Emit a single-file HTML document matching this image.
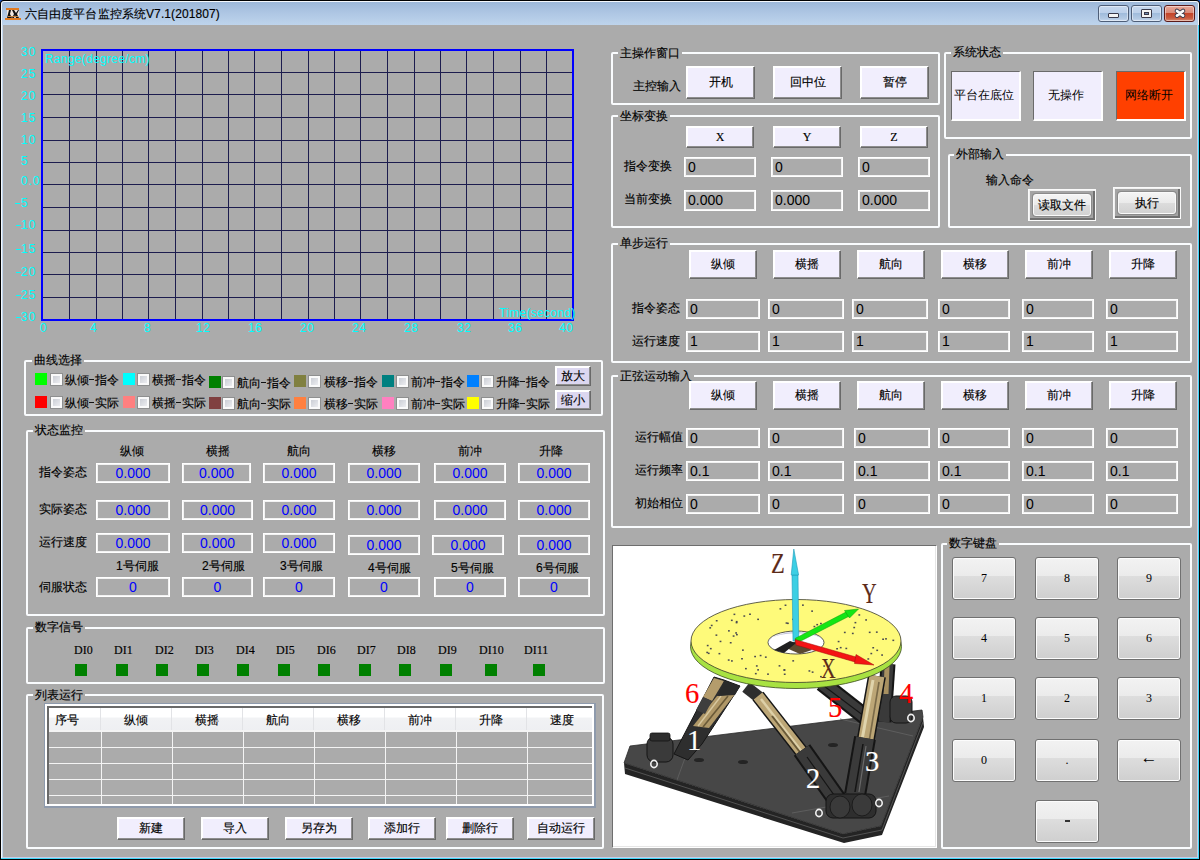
<!DOCTYPE html><html><head><meta charset="utf-8"><style>
*{box-sizing:border-box;margin:0;padding:0}
html,body{width:1200px;height:860px;overflow:hidden;background:#000}
body{position:relative;font-family:"Liberation Sans",sans-serif;font-size:12px;color:#000}
.hy{display:inline-block;position:relative;width:6px;height:12px;vertical-align:top}.hy:after{content:"";position:absolute;left:0;top:5px;width:5px;height:1px;background:#111}
.t{position:absolute;white-space:nowrap;-webkit-text-stroke:0.15px currentColor}
.gb{position:absolute;border:2px solid #FAFCFE;border-radius:2px}
.gt{position:absolute;background:#ABABAB;padding:0 2px;font-size:12px;line-height:12px;white-space:nowrap;-webkit-text-stroke:0.15px #000}
.btn{position:absolute;border:1px solid;border-color:#FFFFFF #696969 #696969 #FFFFFF;box-shadow:inset -1px -1px 0 #8E8E8E,inset 1px 1px 0 #FFFFFF;text-align:center;white-space:nowrap;font-size:12px;-webkit-text-stroke:0.15px #000}
.eb{position:absolute;border:1px solid #FFFFFF;box-shadow:inset 0 0 0 1px #F2F2F2;white-space:nowrap;background:#ABABAB}
.kb{position:absolute;border:1px solid #707070;border-radius:3px;background:linear-gradient(#F2F2F2 0%,#EBEBEB 45%,#DDDDDD 45%,#CFCFCF 100%);box-shadow:inset 0 0 0 1px #FCFCFC;text-align:center;font-family:"Liberation Serif",serif;font-size:12px}
</style></head><body>

<div style="position:absolute;left:0px;top:0px;width:1200px;height:860px;background:#000"></div>
<div style="position:absolute;left:0px;top:0px;width:3px;height:3px;background:#1E5AC8"></div>
<div style="position:absolute;left:1197px;top:0px;width:3px;height:3px;background:#1E5AC8"></div>
<div style="position:absolute;left:0px;top:0px;width:1200px;height:860px;background:#000;border-radius:4px 4px 0 0"></div>
<div style="position:absolute;left:1px;top:1px;width:1198px;height:858px;background:#F4F8FC;border-radius:3px 3px 0 0"></div>
<div style="position:absolute;left:2px;top:2px;width:1196px;height:23px;background:linear-gradient(#9DB8D9,#AFC7E4 50%,#BED4EC);border-radius:2px 2px 0 0"></div>
<div style="position:absolute;left:2px;top:25px;width:1px;height:833px;background:#C4D8EE"></div>
<div style="position:absolute;left:3px;top:25px;width:1194px;height:832px;background:#ABABAB"></div>
<div style="position:absolute;left:1197px;top:25px;width:1px;height:833px;background:#C8CDE8"></div>
<div style="position:absolute;left:1198px;top:25px;width:1px;height:834px;background:#40D8F8"></div>
<div style="position:absolute;left:3px;top:857px;width:1195px;height:1px;background:#C8CDE8"></div>
<div style="position:absolute;left:1px;top:858px;width:1198px;height:1px;background:#40D8F8"></div>
<svg style="position:absolute;left:4px;top:7px" width="18" height="14" viewBox="0 0 18 14"><rect x="2" y="1" width="13" height="2" fill="#E07A20"/><rect x="1" y="11" width="16" height="2" fill="#E07A20"/><rect x="3" y="3" width="12" height="8" fill="#F2E8E0"/><path d="M3,11 L5,3 L7,3 L6,7 L8,11 Z M8,3 L10,3 L12,6 L14,3 L15,3 L13,7 L15,11 L12,11 L11,8 L10,11 L8,11 L10,7 Z" fill="#111"/><rect x="4" y="9" width="10" height="1" fill="#C08040"/></svg>
<div class="t" style="left:25px;top:8px;font-size:12px;line-height:12px;color:#000;letter-spacing:0.1px">六自由度平台监控系统V7.1(201807)</div>
<div style="position:absolute;left:1098px;top:5px;width:31px;height:17px;border:1px solid #4E5E78;border-radius:3px;background:linear-gradient(#C6D8EE 0%,#BCD0EA 45%,#A0BCDC 50%,#B4CAE4 85%,#C8DAF0 100%);box-shadow:inset 0 0 0 1px rgba(255,255,255,0.45)"></div>
<div style="position:absolute;left:1131px;top:5px;width:31px;height:17px;border:1px solid #4E5E78;border-radius:3px;background:linear-gradient(#C6D8EE 0%,#BCD0EA 45%,#A0BCDC 50%,#B4CAE4 85%,#C8DAF0 100%);box-shadow:inset 0 0 0 1px rgba(255,255,255,0.45)"></div>
<div style="position:absolute;left:1164px;top:5px;width:31px;height:17px;border:1px solid #5A1A1A;border-radius:3px;background:linear-gradient(#E8A898 0%,#D98A78 45%,#C4452A 50%,#C85A3E 80%,#D88A70 100%);box-shadow:inset 0 0 0 1px rgba(255,255,255,0.45)"></div>
<div style="position:absolute;left:1108px;top:13px;width:11px;height:5px;background:#F4F4F4;border:1px solid #3A3A4A;border-radius:1px"></div>
<div style="position:absolute;left:1141px;top:9px;width:11px;height:9px;background:#F4F4F4;border:1px solid #3A3A4A;border-radius:1px"></div>
<div style="position:absolute;left:1144px;top:12px;width:5px;height:3px;background:#6E8AB0;border:1px solid #3A3A4A"></div>
<svg style="position:absolute;left:1172px;top:7px" width="16" height="13" viewBox="0 0 16 13"><path d="M5 4 L11 8.6 M11 4 L5 8.6" stroke="#3A3A4A" stroke-width="4.6" stroke-linecap="round"/><path d="M5 4 L11 8.6 M11 4 L5 8.6" stroke="#FAFAFA" stroke-width="2.8" stroke-linecap="round"/></svg>
<svg style="position:absolute;left:0;top:0" width="600" height="345"><rect x="69" y="51" width="1" height="268" fill="#1C1C4E"/><rect x="96" y="51" width="1" height="268" fill="#1C1C4E"/><rect x="122" y="51" width="1" height="268" fill="#1C1C4E"/><rect x="148" y="51" width="1" height="268" fill="#1C1C4E"/><rect x="175" y="51" width="1" height="268" fill="#1C1C4E"/><rect x="202" y="51" width="1" height="268" fill="#1C1C4E"/><rect x="228" y="51" width="1" height="268" fill="#1C1C4E"/><rect x="254" y="51" width="1" height="268" fill="#1C1C4E"/><rect x="281" y="51" width="1" height="268" fill="#1C1C4E"/><rect x="308" y="51" width="1" height="268" fill="#1C1C4E"/><rect x="334" y="51" width="1" height="268" fill="#1C1C4E"/><rect x="360" y="51" width="1" height="268" fill="#1C1C4E"/><rect x="387" y="51" width="1" height="268" fill="#1C1C4E"/><rect x="414" y="51" width="1" height="268" fill="#1C1C4E"/><rect x="440" y="51" width="1" height="268" fill="#1C1C4E"/><rect x="466" y="51" width="1" height="268" fill="#1C1C4E"/><rect x="493" y="51" width="1" height="268" fill="#1C1C4E"/><rect x="520" y="51" width="1" height="268" fill="#1C1C4E"/><rect x="546" y="51" width="1" height="268" fill="#1C1C4E"/><rect x="43" y="72" width="529" height="1" fill="#1C1C4E"/><rect x="43" y="94" width="529" height="1" fill="#1C1C4E"/><rect x="43" y="117" width="529" height="1" fill="#1C1C4E"/><rect x="43" y="140" width="529" height="1" fill="#1C1C4E"/><rect x="43" y="162" width="529" height="1" fill="#1C1C4E"/><rect x="43" y="184" width="529" height="1" fill="#1C1C4E"/><rect x="43" y="207" width="529" height="1" fill="#1C1C4E"/><rect x="43" y="230" width="529" height="1" fill="#1C1C4E"/><rect x="43" y="252" width="529" height="1" fill="#1C1C4E"/><rect x="43" y="274" width="529" height="1" fill="#1C1C4E"/><rect x="43" y="297" width="529" height="1" fill="#1C1C4E"/><rect x="42" y="50" width="531" height="270" fill="none" stroke="#0000FF" stroke-width="2"/></svg>
<div class="t" style="left:21px;top:46px;font-size:12px;line-height:12px;color:#00FFFF;letter-spacing:1px;-webkit-text-stroke:0">30</div>
<div class="t" style="left:21px;top:68px;font-size:12px;line-height:12px;color:#00FFFF;letter-spacing:1px;-webkit-text-stroke:0">25</div>
<div class="t" style="left:21px;top:90px;font-size:12px;line-height:12px;color:#00FFFF;letter-spacing:1px;-webkit-text-stroke:0">20</div>
<div class="t" style="left:21px;top:112px;font-size:12px;line-height:12px;color:#00FFFF;letter-spacing:1px;-webkit-text-stroke:0">15</div>
<div class="t" style="left:21px;top:134px;font-size:12px;line-height:12px;color:#00FFFF;letter-spacing:1px;-webkit-text-stroke:0">10</div>
<div class="t" style="left:21px;top:155px;font-size:12px;line-height:12px;color:#00FFFF;letter-spacing:1px;-webkit-text-stroke:0">5</div>
<div class="t" style="left:21px;top:175px;font-size:12px;line-height:12px;color:#00FFFF;letter-spacing:1px;-webkit-text-stroke:0">0.0</div>
<div style="position:absolute;left:15px;top:203px;width:5px;height:1px;background:#00FFFF"></div>
<div class="t" style="left:21px;top:197px;font-size:12px;line-height:12px;color:#00FFFF;letter-spacing:1px;-webkit-text-stroke:0">5</div>
<div style="position:absolute;left:16px;top:225px;width:5px;height:1px;background:#00FFFF"></div>
<div class="t" style="left:21px;top:219px;font-size:12px;line-height:12px;color:#00FFFF;letter-spacing:1px;-webkit-text-stroke:0">10</div>
<div style="position:absolute;left:16px;top:249px;width:5px;height:1px;background:#00FFFF"></div>
<div class="t" style="left:21px;top:243px;font-size:12px;line-height:12px;color:#00FFFF;letter-spacing:1px;-webkit-text-stroke:0">15</div>
<div style="position:absolute;left:16px;top:272px;width:5px;height:1px;background:#00FFFF"></div>
<div class="t" style="left:21px;top:266px;font-size:12px;line-height:12px;color:#00FFFF;letter-spacing:1px;-webkit-text-stroke:0">20</div>
<div style="position:absolute;left:16px;top:295px;width:5px;height:1px;background:#00FFFF"></div>
<div class="t" style="left:21px;top:289px;font-size:12px;line-height:12px;color:#00FFFF;letter-spacing:1px;-webkit-text-stroke:0">25</div>
<div style="position:absolute;left:16px;top:317px;width:5px;height:1px;background:#00FFFF"></div>
<div class="t" style="left:21px;top:311px;font-size:12px;line-height:12px;color:#00FFFF;letter-spacing:1px;-webkit-text-stroke:0">30</div>
<div class="t" style="left:40px;top:322px;font-size:12px;line-height:12px;color:#00FFFF;letter-spacing:0.6px;-webkit-text-stroke:0">0</div>
<div class="t" style="left:90px;top:322px;font-size:12px;line-height:12px;color:#00FFFF;letter-spacing:0.6px;-webkit-text-stroke:0">4</div>
<div class="t" style="left:144px;top:322px;font-size:12px;line-height:12px;color:#00FFFF;letter-spacing:0.6px;-webkit-text-stroke:0">8</div>
<div class="t" style="left:196px;top:322px;font-size:12px;line-height:12px;color:#00FFFF;letter-spacing:0.6px;-webkit-text-stroke:0">12</div>
<div class="t" style="left:248px;top:322px;font-size:12px;line-height:12px;color:#00FFFF;letter-spacing:0.6px;-webkit-text-stroke:0">16</div>
<div class="t" style="left:300px;top:322px;font-size:12px;line-height:12px;color:#00FFFF;letter-spacing:0.6px;-webkit-text-stroke:0">20</div>
<div class="t" style="left:352px;top:322px;font-size:12px;line-height:12px;color:#00FFFF;letter-spacing:0.6px;-webkit-text-stroke:0">24</div>
<div class="t" style="left:404px;top:322px;font-size:12px;line-height:12px;color:#00FFFF;letter-spacing:0.6px;-webkit-text-stroke:0">28</div>
<div class="t" style="left:457px;top:322px;font-size:12px;line-height:12px;color:#00FFFF;letter-spacing:0.6px;-webkit-text-stroke:0">32</div>
<div class="t" style="left:508px;top:322px;font-size:12px;line-height:12px;color:#00FFFF;letter-spacing:0.6px;-webkit-text-stroke:0">36</div>
<div class="t" style="left:559px;top:322px;font-size:12px;line-height:12px;color:#00FFFF;letter-spacing:0.6px;-webkit-text-stroke:0">40</div>
<div class="t" style="left:45px;top:53px;font-size:12px;line-height:12px;color:#00FFFF;letter-spacing:0.3px;-webkit-text-stroke:0">Range(degree/cm)</div>
<div class="t" style="left:499px;top:307px;font-size:12px;line-height:12px;color:#00FFFF;letter-spacing:0.3px;-webkit-text-stroke:0">Time(second)</div>
<div class="gb" style="left:24px;top:360px;width:579px;height:56px"></div>
<div class="gt" style="left:32px;top:354px">曲线选择</div>
<div style="position:absolute;left:35px;top:373px;width:12px;height:12px;background:#00FF00"></div>
<div style="position:absolute;left:50px;top:373px;width:13px;height:13px;border:1px solid #8E8F8F;background:linear-gradient(135deg,#C2C6CE,#F6F6F8);box-shadow:inset 0 0 0 2px #FAFAFA"></div>
<div class="t" style="left:65px;top:374px;font-size:12px;line-height:12px;color:#000;">纵倾<span class="hy"></span>指令</div>
<div style="position:absolute;left:35px;top:396px;width:12px;height:12px;background:#FF0000"></div>
<div style="position:absolute;left:50px;top:396px;width:13px;height:13px;border:1px solid #8E8F8F;background:linear-gradient(135deg,#C2C6CE,#F6F6F8);box-shadow:inset 0 0 0 2px #FAFAFA"></div>
<div class="t" style="left:65px;top:397px;font-size:12px;line-height:12px;color:#000;">纵倾<span class="hy"></span>实际</div>
<div style="position:absolute;left:123px;top:373px;width:12px;height:12px;background:#00FFFF"></div>
<div style="position:absolute;left:137px;top:373px;width:13px;height:13px;border:1px solid #8E8F8F;background:linear-gradient(135deg,#C2C6CE,#F6F6F8);box-shadow:inset 0 0 0 2px #FAFAFA"></div>
<div class="t" style="left:152px;top:374px;font-size:12px;line-height:12px;color:#000;">横摇<span class="hy"></span>指令</div>
<div style="position:absolute;left:123px;top:396px;width:12px;height:12px;background:#FF8080"></div>
<div style="position:absolute;left:137px;top:396px;width:13px;height:13px;border:1px solid #8E8F8F;background:linear-gradient(135deg,#C2C6CE,#F6F6F8);box-shadow:inset 0 0 0 2px #FAFAFA"></div>
<div class="t" style="left:152px;top:397px;font-size:12px;line-height:12px;color:#000;">横摇<span class="hy"></span>实际</div>
<div style="position:absolute;left:209px;top:376px;width:12px;height:12px;background:#008000"></div>
<div style="position:absolute;left:222px;top:376px;width:13px;height:13px;border:1px solid #8E8F8F;background:linear-gradient(135deg,#C2C6CE,#F6F6F8);box-shadow:inset 0 0 0 2px #FAFAFA"></div>
<div class="t" style="left:237px;top:377px;font-size:12px;line-height:12px;color:#000;">航向<span class="hy"></span>指令</div>
<div style="position:absolute;left:209px;top:397px;width:12px;height:12px;background:#804040"></div>
<div style="position:absolute;left:222px;top:397px;width:13px;height:13px;border:1px solid #8E8F8F;background:linear-gradient(135deg,#C2C6CE,#F6F6F8);box-shadow:inset 0 0 0 2px #FAFAFA"></div>
<div class="t" style="left:237px;top:398px;font-size:12px;line-height:12px;color:#000;">航向<span class="hy"></span>实际</div>
<div style="position:absolute;left:294px;top:375px;width:12px;height:12px;background:#808040"></div>
<div style="position:absolute;left:308px;top:375px;width:13px;height:13px;border:1px solid #8E8F8F;background:linear-gradient(135deg,#C2C6CE,#F6F6F8);box-shadow:inset 0 0 0 2px #FAFAFA"></div>
<div class="t" style="left:324px;top:376px;font-size:12px;line-height:12px;color:#000;">横移<span class="hy"></span>指令</div>
<div style="position:absolute;left:294px;top:397px;width:12px;height:12px;background:#FF8040"></div>
<div style="position:absolute;left:308px;top:397px;width:13px;height:13px;border:1px solid #8E8F8F;background:linear-gradient(135deg,#C2C6CE,#F6F6F8);box-shadow:inset 0 0 0 2px #FAFAFA"></div>
<div class="t" style="left:324px;top:398px;font-size:12px;line-height:12px;color:#000;">横移<span class="hy"></span>实际</div>
<div style="position:absolute;left:382px;top:375px;width:12px;height:12px;background:#008080"></div>
<div style="position:absolute;left:396px;top:375px;width:13px;height:13px;border:1px solid #8E8F8F;background:linear-gradient(135deg,#C2C6CE,#F6F6F8);box-shadow:inset 0 0 0 2px #FAFAFA"></div>
<div class="t" style="left:411px;top:376px;font-size:12px;line-height:12px;color:#000;">前冲<span class="hy"></span>指令</div>
<div style="position:absolute;left:382px;top:397px;width:12px;height:12px;background:#FF80C0"></div>
<div style="position:absolute;left:396px;top:397px;width:13px;height:13px;border:1px solid #8E8F8F;background:linear-gradient(135deg,#C2C6CE,#F6F6F8);box-shadow:inset 0 0 0 2px #FAFAFA"></div>
<div class="t" style="left:411px;top:398px;font-size:12px;line-height:12px;color:#000;">前冲<span class="hy"></span>实际</div>
<div style="position:absolute;left:467px;top:375px;width:12px;height:12px;background:#0080FF"></div>
<div style="position:absolute;left:481px;top:375px;width:13px;height:13px;border:1px solid #8E8F8F;background:linear-gradient(135deg,#C2C6CE,#F6F6F8);box-shadow:inset 0 0 0 2px #FAFAFA"></div>
<div class="t" style="left:496px;top:376px;font-size:12px;line-height:12px;color:#000;">升降<span class="hy"></span>指令</div>
<div style="position:absolute;left:467px;top:397px;width:12px;height:12px;background:#FFFF00"></div>
<div style="position:absolute;left:481px;top:397px;width:13px;height:13px;border:1px solid #8E8F8F;background:linear-gradient(135deg,#C2C6CE,#F6F6F8);box-shadow:inset 0 0 0 2px #FAFAFA"></div>
<div class="t" style="left:496px;top:398px;font-size:12px;line-height:12px;color:#000;">升降<span class="hy"></span>实际</div>
<div class="btn" style="left:555px;top:366px;width:36px;height:20px;background:#DCD7F0;"><span style="line-height:18px">放大</span></div>
<div class="btn" style="left:555px;top:390px;width:36px;height:20px;background:#DCD7F0;"><span style="line-height:18px">缩小</span></div>
<div class="gb" style="left:26px;top:430px;width:579px;height:186px"></div>
<div class="gt" style="left:33px;top:424px">状态监控</div>
<div class="t" style="left:120px;top:445px;font-size:12px;line-height:12px;color:#000;">纵倾</div>
<div class="t" style="left:206px;top:445px;font-size:12px;line-height:12px;color:#000;">横摇</div>
<div class="t" style="left:287px;top:445px;font-size:12px;line-height:12px;color:#000;">航向</div>
<div class="t" style="left:372px;top:445px;font-size:12px;line-height:12px;color:#000;">横移</div>
<div class="t" style="left:458px;top:445px;font-size:12px;line-height:12px;color:#000;">前冲</div>
<div class="t" style="left:539px;top:445px;font-size:12px;line-height:12px;color:#000;">升降</div>
<div class="t" style="left:39px;top:466px;font-size:12px;line-height:12px;color:#000;">指令姿态</div>
<div class="t" style="left:39px;top:503px;font-size:12px;line-height:12px;color:#000;">实际姿态</div>
<div class="t" style="left:39px;top:536px;font-size:12px;line-height:12px;color:#000;">运行速度</div>
<div class="t" style="left:39px;top:581px;font-size:12px;line-height:12px;color:#000;">伺服状态</div>
<div class="eb" style="left:96px;top:463px;width:74px;height:20px;color:#0000FF;text-align:center;font-size:14px;line-height:18px">0.000</div>
<div class="eb" style="left:96px;top:500px;width:74px;height:20px;color:#0000FF;text-align:center;font-size:14px;line-height:18px">0.000</div>
<div class="eb" style="left:96px;top:533px;width:74px;height:20px;color:#0000FF;text-align:center;font-size:14px;line-height:18px">0.000</div>
<div class="eb" style="left:96px;top:577px;width:74px;height:20px;color:#0000FF;text-align:center;font-size:14px;line-height:18px">0</div>
<div class="eb" style="left:182px;top:463px;width:69px;height:20px;color:#0000FF;text-align:center;font-size:14px;line-height:18px">0.000</div>
<div class="eb" style="left:182px;top:500px;width:71px;height:20px;color:#0000FF;text-align:center;font-size:14px;line-height:18px">0.000</div>
<div class="eb" style="left:182px;top:533px;width:71px;height:20px;color:#0000FF;text-align:center;font-size:14px;line-height:18px">0.000</div>
<div class="eb" style="left:182px;top:577px;width:71px;height:20px;color:#0000FF;text-align:center;font-size:14px;line-height:18px">0</div>
<div class="eb" style="left:263px;top:463px;width:72px;height:20px;color:#0000FF;text-align:center;font-size:14px;line-height:18px">0.000</div>
<div class="eb" style="left:263px;top:500px;width:72px;height:20px;color:#0000FF;text-align:center;font-size:14px;line-height:18px">0.000</div>
<div class="eb" style="left:263px;top:533px;width:72px;height:20px;color:#0000FF;text-align:center;font-size:14px;line-height:18px">0.000</div>
<div class="eb" style="left:263px;top:577px;width:72px;height:20px;color:#0000FF;text-align:center;font-size:14px;line-height:18px">0</div>
<div class="eb" style="left:348px;top:463px;width:72px;height:20px;color:#0000FF;text-align:center;font-size:14px;line-height:18px">0.000</div>
<div class="eb" style="left:348px;top:500px;width:72px;height:20px;color:#0000FF;text-align:center;font-size:14px;line-height:18px">0.000</div>
<div class="eb" style="left:348px;top:535px;width:72px;height:20px;color:#0000FF;text-align:center;font-size:14px;line-height:18px">0.000</div>
<div class="eb" style="left:348px;top:577px;width:72px;height:20px;color:#0000FF;text-align:center;font-size:14px;line-height:18px">0</div>
<div class="eb" style="left:434px;top:463px;width:72px;height:20px;color:#0000FF;text-align:center;font-size:14px;line-height:18px">0.000</div>
<div class="eb" style="left:434px;top:500px;width:72px;height:20px;color:#0000FF;text-align:center;font-size:14px;line-height:18px">0.000</div>
<div class="eb" style="left:432px;top:535px;width:72px;height:20px;color:#0000FF;text-align:center;font-size:14px;line-height:18px">0.000</div>
<div class="eb" style="left:434px;top:577px;width:72px;height:20px;color:#0000FF;text-align:center;font-size:14px;line-height:18px">0</div>
<div class="eb" style="left:518px;top:463px;width:72px;height:20px;color:#0000FF;text-align:center;font-size:14px;line-height:18px">0.000</div>
<div class="eb" style="left:518px;top:500px;width:72px;height:20px;color:#0000FF;text-align:center;font-size:14px;line-height:18px">0.000</div>
<div class="eb" style="left:518px;top:535px;width:72px;height:20px;color:#0000FF;text-align:center;font-size:14px;line-height:18px">0.000</div>
<div class="eb" style="left:518px;top:577px;width:72px;height:20px;color:#0000FF;text-align:center;font-size:14px;line-height:18px">0</div>
<div class="t" style="left:116px;top:560px;font-size:12px;line-height:12px;color:#000;">1号伺服</div>
<div class="t" style="left:202px;top:560px;font-size:12px;line-height:12px;color:#000;">2号伺服</div>
<div class="t" style="left:280px;top:560px;font-size:12px;line-height:12px;color:#000;">3号伺服</div>
<div class="t" style="left:368px;top:562px;font-size:12px;line-height:12px;color:#000;">4号伺服</div>
<div class="t" style="left:451px;top:562px;font-size:12px;line-height:12px;color:#000;">5号伺服</div>
<div class="t" style="left:536px;top:562px;font-size:12px;line-height:12px;color:#000;">6号伺服</div>
<div class="gb" style="left:26px;top:627px;width:579px;height:57px"></div>
<div class="gt" style="left:33px;top:621px">数字信号</div>
<div class="t" style="left:74px;top:643px;font-size:12px;line-height:12px;color:#000;font-family:'Liberation Serif',serif;letter-spacing:0px;transform:scaleY(1.12);transform-origin:0 0">DI0</div>
<div style="position:absolute;left:75px;top:664px;width:12px;height:12px;background:#008000"></div>
<div class="t" style="left:114px;top:643px;font-size:12px;line-height:12px;color:#000;font-family:'Liberation Serif',serif;letter-spacing:0px;transform:scaleY(1.12);transform-origin:0 0">DI1</div>
<div style="position:absolute;left:116px;top:664px;width:12px;height:12px;background:#008000"></div>
<div class="t" style="left:155px;top:643px;font-size:12px;line-height:12px;color:#000;font-family:'Liberation Serif',serif;letter-spacing:0px;transform:scaleY(1.12);transform-origin:0 0">DI2</div>
<div style="position:absolute;left:156px;top:664px;width:12px;height:12px;background:#008000"></div>
<div class="t" style="left:195px;top:643px;font-size:12px;line-height:12px;color:#000;font-family:'Liberation Serif',serif;letter-spacing:0px;transform:scaleY(1.12);transform-origin:0 0">DI3</div>
<div style="position:absolute;left:197px;top:664px;width:12px;height:12px;background:#008000"></div>
<div class="t" style="left:236px;top:643px;font-size:12px;line-height:12px;color:#000;font-family:'Liberation Serif',serif;letter-spacing:0px;transform:scaleY(1.12);transform-origin:0 0">DI4</div>
<div style="position:absolute;left:237px;top:664px;width:12px;height:12px;background:#008000"></div>
<div class="t" style="left:276px;top:643px;font-size:12px;line-height:12px;color:#000;font-family:'Liberation Serif',serif;letter-spacing:0px;transform:scaleY(1.12);transform-origin:0 0">DI5</div>
<div style="position:absolute;left:278px;top:664px;width:12px;height:12px;background:#008000"></div>
<div class="t" style="left:317px;top:643px;font-size:12px;line-height:12px;color:#000;font-family:'Liberation Serif',serif;letter-spacing:0px;transform:scaleY(1.12);transform-origin:0 0">DI6</div>
<div style="position:absolute;left:318px;top:664px;width:12px;height:12px;background:#008000"></div>
<div class="t" style="left:357px;top:643px;font-size:12px;line-height:12px;color:#000;font-family:'Liberation Serif',serif;letter-spacing:0px;transform:scaleY(1.12);transform-origin:0 0">DI7</div>
<div style="position:absolute;left:359px;top:664px;width:12px;height:12px;background:#008000"></div>
<div class="t" style="left:397px;top:643px;font-size:12px;line-height:12px;color:#000;font-family:'Liberation Serif',serif;letter-spacing:0px;transform:scaleY(1.12);transform-origin:0 0">DI8</div>
<div style="position:absolute;left:399px;top:664px;width:12px;height:12px;background:#008000"></div>
<div class="t" style="left:438px;top:643px;font-size:12px;line-height:12px;color:#000;font-family:'Liberation Serif',serif;letter-spacing:0px;transform:scaleY(1.12);transform-origin:0 0">DI9</div>
<div style="position:absolute;left:440px;top:664px;width:12px;height:12px;background:#008000"></div>
<div class="t" style="left:479px;top:643px;font-size:12px;line-height:12px;color:#000;font-family:'Liberation Serif',serif;letter-spacing:0px;transform:scaleY(1.12);transform-origin:0 0">DI10</div>
<div style="position:absolute;left:485px;top:664px;width:12px;height:12px;background:#008000"></div>
<div class="t" style="left:524px;top:643px;font-size:12px;line-height:12px;color:#000;font-family:'Liberation Serif',serif;letter-spacing:0px;transform:scaleY(1.12);transform-origin:0 0">DI11</div>
<div style="position:absolute;left:533px;top:664px;width:12px;height:12px;background:#008000"></div>
<div class="gb" style="left:26px;top:694px;width:578px;height:155px"></div>
<div class="gt" style="left:33px;top:689px">列表运行</div>
<div style="position:absolute;left:44px;top:703px;width:552px;height:105px;background:#8E9AAC"></div>
<div style="position:absolute;left:45px;top:704px;width:549px;height:102px;background:#FFFFFF"></div>
<div style="position:absolute;left:47px;top:706px;width:545px;height:98px;background:#696969"></div>
<div style="position:absolute;left:49px;top:708px;width:543px;height:96px;background:#ABABAB"></div>
<div style="position:absolute;left:49px;top:708px;width:543px;height:23px;background:linear-gradient(#FFFFFF 0%,#FFFFFF 38%,#F1F2F4 45%,#EEEFF2 100%)"></div>
<div style="position:absolute;left:100px;top:708px;width:1px;height:23px;background:#E2E3E6"></div>
<div style="position:absolute;left:101px;top:731px;width:1px;height:73px;background:#F4F4F4"></div>
<div style="position:absolute;left:171px;top:708px;width:1px;height:23px;background:#E2E3E6"></div>
<div style="position:absolute;left:172px;top:731px;width:1px;height:73px;background:#F4F4F4"></div>
<div style="position:absolute;left:242px;top:708px;width:1px;height:23px;background:#E2E3E6"></div>
<div style="position:absolute;left:243px;top:731px;width:1px;height:73px;background:#F4F4F4"></div>
<div style="position:absolute;left:313px;top:708px;width:1px;height:23px;background:#E2E3E6"></div>
<div style="position:absolute;left:314px;top:731px;width:1px;height:73px;background:#F4F4F4"></div>
<div style="position:absolute;left:384px;top:708px;width:1px;height:23px;background:#E2E3E6"></div>
<div style="position:absolute;left:385px;top:731px;width:1px;height:73px;background:#F4F4F4"></div>
<div style="position:absolute;left:455px;top:708px;width:1px;height:23px;background:#E2E3E6"></div>
<div style="position:absolute;left:456px;top:731px;width:1px;height:73px;background:#F4F4F4"></div>
<div style="position:absolute;left:526px;top:708px;width:1px;height:23px;background:#E2E3E6"></div>
<div style="position:absolute;left:527px;top:731px;width:1px;height:73px;background:#F4F4F4"></div>
<div style="position:absolute;left:49px;top:730px;width:543px;height:2px;background:#F4F4F4"></div>
<div style="position:absolute;left:49px;top:747px;width:543px;height:1px;background:#F4F4F4"></div>
<div style="position:absolute;left:49px;top:763px;width:543px;height:1px;background:#F4F4F4"></div>
<div style="position:absolute;left:49px;top:779px;width:543px;height:1px;background:#F4F4F4"></div>
<div style="position:absolute;left:49px;top:795px;width:543px;height:1px;background:#F4F4F4"></div>
<div class="t" style="left:55px;top:714px;font-size:12px;line-height:12px;color:#000;">序号</div>
<div class="t" style="left:124px;top:714px;font-size:12px;line-height:12px;color:#000;">纵倾</div>
<div class="t" style="left:195px;top:714px;font-size:12px;line-height:12px;color:#000;">横摇</div>
<div class="t" style="left:266px;top:714px;font-size:12px;line-height:12px;color:#000;">航向</div>
<div class="t" style="left:337px;top:714px;font-size:12px;line-height:12px;color:#000;">横移</div>
<div class="t" style="left:408px;top:714px;font-size:12px;line-height:12px;color:#000;">前冲</div>
<div class="t" style="left:479px;top:714px;font-size:12px;line-height:12px;color:#000;">升降</div>
<div class="t" style="left:550px;top:714px;font-size:12px;line-height:12px;color:#000;">速度</div>
<div class="btn" style="left:117px;top:817px;width:68px;height:23px;background:#F1EEFD;"><span style="line-height:21px">新建</span></div>
<div class="btn" style="left:201px;top:817px;width:68px;height:23px;background:#F1EEFD;"><span style="line-height:21px">导入</span></div>
<div class="btn" style="left:285px;top:817px;width:68px;height:23px;background:#F1EEFD;"><span style="line-height:21px">另存为</span></div>
<div class="btn" style="left:368px;top:817px;width:68px;height:23px;background:#F1EEFD;"><span style="line-height:21px">添加行</span></div>
<div class="btn" style="left:446px;top:817px;width:68px;height:23px;background:#F1EEFD;"><span style="line-height:21px">删除行</span></div>
<div class="btn" style="left:527px;top:817px;width:68px;height:23px;background:#F1EEFD;"><span style="line-height:21px">自动运行</span></div>
<div class="gb" style="left:611px;top:52px;width:329px;height:53px"></div>
<div class="gt" style="left:618px;top:47px">主操作窗口</div>
<div class="t" style="left:633px;top:80px;font-size:12px;line-height:12px;color:#000;">主控输入</div>
<div class="btn" style="left:686px;top:66px;width:69px;height:33px;background:#F1EEFD;"><span style="line-height:31px">开机</span></div>
<div class="btn" style="left:773px;top:66px;width:69px;height:33px;background:#F1EEFD;"><span style="line-height:31px">回中位</span></div>
<div class="btn" style="left:860px;top:66px;width:69px;height:33px;background:#F1EEFD;"><span style="line-height:31px">暂停</span></div>
<div class="gb" style="left:611px;top:115px;width:329px;height:113px"></div>
<div class="gt" style="left:618px;top:110px">坐标变换</div>
<div class="btn" style="left:686px;top:126px;width:68px;height:22px;background:#F1EEFD;font-family:'Liberation Serif',serif;font-size:12px"><span style="line-height:20px">X</span></div>
<div class="btn" style="left:773px;top:126px;width:68px;height:22px;background:#F1EEFD;font-family:'Liberation Serif',serif;font-size:12px"><span style="line-height:20px">Y</span></div>
<div class="btn" style="left:860px;top:126px;width:68px;height:22px;background:#F1EEFD;font-family:'Liberation Serif',serif;font-size:12px"><span style="line-height:20px">Z</span></div>
<div class="t" style="left:624px;top:160px;font-size:12px;line-height:12px;color:#000;">指令变换</div>
<div class="t" style="left:624px;top:193px;font-size:12px;line-height:12px;color:#000;">当前变换</div>
<div class="eb" style="left:684px;top:157px;width:72px;height:20px;color:#000;font-size:14px;line-height:18px;padding-left:3px">0</div>
<div class="eb" style="left:684px;top:190px;width:72px;height:21px;color:#000;font-size:14px;line-height:19px;padding-left:3px">0.000</div>
<div class="eb" style="left:771px;top:157px;width:72px;height:20px;color:#000;font-size:14px;line-height:18px;padding-left:3px">0</div>
<div class="eb" style="left:771px;top:190px;width:72px;height:21px;color:#000;font-size:14px;line-height:19px;padding-left:3px">0.000</div>
<div class="eb" style="left:858px;top:157px;width:72px;height:20px;color:#000;font-size:14px;line-height:18px;padding-left:3px">0</div>
<div class="eb" style="left:858px;top:190px;width:72px;height:21px;color:#000;font-size:14px;line-height:19px;padding-left:3px">0.000</div>
<div class="gb" style="left:944px;top:52px;width:248px;height:87px"></div>
<div class="gt" style="left:951px;top:46px">系统状态</div>
<div style="position:absolute;left:951px;top:71px;width:70px;height:50px;background:#F1EEFD;border:1px solid;border-width:1px 2px 2px 1px;border-color:#6A6A6A #FFFFFF #FFFFFF #6A6A6A;text-align:center;padding-right:4px;line-height:46px;font-size:12px;white-space:nowrap">平台在底位</div>
<div style="position:absolute;left:1033px;top:71px;width:70px;height:50px;background:#F1EEFD;border:1px solid;border-width:1px 2px 2px 1px;border-color:#6A6A6A #FFFFFF #FFFFFF #6A6A6A;text-align:center;padding-right:4px;line-height:46px;font-size:12px;white-space:nowrap">无操作</div>
<div style="position:absolute;left:1116px;top:71px;width:70px;height:50px;background:#FF4000;border:1px solid;border-width:1px 2px 2px 1px;border-color:#6A6A6A #FFFFFF #FFFFFF #6A6A6A;text-align:center;padding-right:4px;line-height:46px;font-size:12px;white-space:nowrap">网络断开</div>
<div class="gb" style="left:948px;top:154px;width:244px;height:74px"></div>
<div class="gt" style="left:954px;top:148px">外部输入</div>
<div class="t" style="left:986px;top:174px;font-size:12px;line-height:12px;color:#000;">输入命令</div>
<div style="position:absolute;left:1028px;top:189px;width:68px;height:32px;border:1px solid #FAFAFA;box-shadow:inset 1px 1px 0 #F0F0F0,inset -2px -2px 0 #707070;background:#A4A4A4"></div>
<div style="position:absolute;left:1033px;top:194px;width:58px;height:22px;border:1px solid #FAFAFA;border-radius:3px;box-shadow:0 0 0 1px #8A8A8A;background:linear-gradient(#F4F4F4 0%,#EAEAEA 50%,#DCDCDC 51%,#D2D2D2 100%);text-align:center;line-height:20px;font-size:12px;white-space:nowrap;-webkit-text-stroke:0.15px #000">读取文件</div>
<div style="position:absolute;left:1113px;top:187px;width:68px;height:32px;border:1px solid #FAFAFA;box-shadow:inset 1px 1px 0 #F0F0F0,inset -2px -2px 0 #707070;background:#A4A4A4"></div>
<div style="position:absolute;left:1118px;top:192px;width:58px;height:22px;border:1px solid #FAFAFA;border-radius:3px;box-shadow:0 0 0 1px #8A8A8A;background:linear-gradient(#F4F4F4 0%,#EAEAEA 50%,#DCDCDC 51%,#D2D2D2 100%);text-align:center;line-height:20px;font-size:12px;white-space:nowrap;-webkit-text-stroke:0.15px #000">执行</div>
<div class="gb" style="left:611px;top:243px;width:581px;height:120px"></div>
<div class="gt" style="left:618px;top:237px">单步运行</div>
<div class="gb" style="left:611px;top:375px;width:581px;height:153px"></div>
<div class="gt" style="left:618px;top:370px">正弦运动输入</div>
<div class="btn" style="left:689px;top:250px;width:68px;height:29px;background:#F1EEFD;"><span style="line-height:27px">纵倾</span></div>
<div class="btn" style="left:689px;top:381px;width:68px;height:29px;background:#F1EEFD;"><span style="line-height:27px">纵倾</span></div>
<div class="btn" style="left:773px;top:250px;width:68px;height:29px;background:#F1EEFD;"><span style="line-height:27px">横摇</span></div>
<div class="btn" style="left:773px;top:381px;width:68px;height:29px;background:#F1EEFD;"><span style="line-height:27px">横摇</span></div>
<div class="btn" style="left:857px;top:250px;width:68px;height:29px;background:#F1EEFD;"><span style="line-height:27px">航向</span></div>
<div class="btn" style="left:857px;top:381px;width:68px;height:29px;background:#F1EEFD;"><span style="line-height:27px">航向</span></div>
<div class="btn" style="left:941px;top:250px;width:68px;height:29px;background:#F1EEFD;"><span style="line-height:27px">横移</span></div>
<div class="btn" style="left:941px;top:381px;width:68px;height:29px;background:#F1EEFD;"><span style="line-height:27px">横移</span></div>
<div class="btn" style="left:1025px;top:250px;width:68px;height:29px;background:#F1EEFD;"><span style="line-height:27px">前冲</span></div>
<div class="btn" style="left:1025px;top:381px;width:68px;height:29px;background:#F1EEFD;"><span style="line-height:27px">前冲</span></div>
<div class="btn" style="left:1109px;top:250px;width:68px;height:29px;background:#F1EEFD;"><span style="line-height:27px">升降</span></div>
<div class="btn" style="left:1109px;top:381px;width:68px;height:29px;background:#F1EEFD;"><span style="line-height:27px">升降</span></div>
<div class="t" style="left:632px;top:302px;font-size:12px;line-height:12px;color:#000;">指令姿态</div>
<div class="t" style="left:632px;top:335px;font-size:12px;line-height:12px;color:#000;">运行速度</div>
<div class="t" style="left:635px;top:431px;font-size:12px;line-height:12px;color:#000;">运行幅值</div>
<div class="t" style="left:635px;top:464px;font-size:12px;line-height:12px;color:#000;">运行频率</div>
<div class="t" style="left:635px;top:497px;font-size:12px;line-height:12px;color:#000;">初始相位</div>
<div class="eb" style="left:686px;top:299px;width:74px;height:20px;color:#000;font-size:14px;line-height:18px;padding-left:3px">0</div>
<div class="eb" style="left:686px;top:331px;width:74px;height:21px;color:#000;font-size:14px;line-height:19px;padding-left:3px">1</div>
<div class="eb" style="left:686px;top:428px;width:74px;height:20px;color:#000;font-size:14px;line-height:18px;padding-left:3px">0</div>
<div class="eb" style="left:686px;top:461px;width:74px;height:20px;color:#000;font-size:14px;line-height:18px;padding-left:3px">0.1</div>
<div class="eb" style="left:686px;top:494px;width:74px;height:20px;color:#000;font-size:14px;line-height:18px;padding-left:3px">0</div>
<div class="eb" style="left:768px;top:299px;width:76px;height:20px;color:#000;font-size:14px;line-height:18px;padding-left:3px">0</div>
<div class="eb" style="left:768px;top:331px;width:76px;height:21px;color:#000;font-size:14px;line-height:19px;padding-left:3px">1</div>
<div class="eb" style="left:768px;top:428px;width:76px;height:20px;color:#000;font-size:14px;line-height:18px;padding-left:3px">0</div>
<div class="eb" style="left:768px;top:461px;width:76px;height:20px;color:#000;font-size:14px;line-height:18px;padding-left:3px">0.1</div>
<div class="eb" style="left:768px;top:494px;width:76px;height:20px;color:#000;font-size:14px;line-height:18px;padding-left:3px">0</div>
<div class="eb" style="left:852px;top:299px;width:76px;height:20px;color:#000;font-size:14px;line-height:18px;padding-left:3px">0</div>
<div class="eb" style="left:852px;top:331px;width:76px;height:21px;color:#000;font-size:14px;line-height:19px;padding-left:3px">1</div>
<div class="eb" style="left:854px;top:428px;width:76px;height:20px;color:#000;font-size:14px;line-height:18px;padding-left:3px">0</div>
<div class="eb" style="left:854px;top:461px;width:76px;height:20px;color:#000;font-size:14px;line-height:18px;padding-left:3px">0.1</div>
<div class="eb" style="left:854px;top:494px;width:76px;height:20px;color:#000;font-size:14px;line-height:18px;padding-left:3px">0</div>
<div class="eb" style="left:938px;top:299px;width:72px;height:20px;color:#000;font-size:14px;line-height:18px;padding-left:3px">0</div>
<div class="eb" style="left:938px;top:331px;width:72px;height:21px;color:#000;font-size:14px;line-height:19px;padding-left:3px">1</div>
<div class="eb" style="left:938px;top:428px;width:72px;height:20px;color:#000;font-size:14px;line-height:18px;padding-left:3px">0</div>
<div class="eb" style="left:938px;top:461px;width:72px;height:20px;color:#000;font-size:14px;line-height:18px;padding-left:3px">0.1</div>
<div class="eb" style="left:938px;top:494px;width:72px;height:20px;color:#000;font-size:14px;line-height:18px;padding-left:3px">0</div>
<div class="eb" style="left:1022px;top:299px;width:72px;height:20px;color:#000;font-size:14px;line-height:18px;padding-left:3px">0</div>
<div class="eb" style="left:1022px;top:331px;width:72px;height:21px;color:#000;font-size:14px;line-height:19px;padding-left:3px">1</div>
<div class="eb" style="left:1022px;top:428px;width:72px;height:20px;color:#000;font-size:14px;line-height:18px;padding-left:3px">0</div>
<div class="eb" style="left:1022px;top:461px;width:72px;height:20px;color:#000;font-size:14px;line-height:18px;padding-left:3px">0.1</div>
<div class="eb" style="left:1022px;top:494px;width:72px;height:20px;color:#000;font-size:14px;line-height:18px;padding-left:3px">0</div>
<div class="eb" style="left:1106px;top:299px;width:72px;height:20px;color:#000;font-size:14px;line-height:18px;padding-left:3px">0</div>
<div class="eb" style="left:1106px;top:331px;width:72px;height:21px;color:#000;font-size:14px;line-height:19px;padding-left:3px">1</div>
<div class="eb" style="left:1106px;top:428px;width:72px;height:20px;color:#000;font-size:14px;line-height:18px;padding-left:3px">0</div>
<div class="eb" style="left:1106px;top:461px;width:72px;height:20px;color:#000;font-size:14px;line-height:18px;padding-left:3px">0.1</div>
<div class="eb" style="left:1106px;top:494px;width:72px;height:20px;color:#000;font-size:14px;line-height:18px;padding-left:3px">0</div>
<div class="gb" style="left:941px;top:543px;width:251px;height:306px"></div>
<div class="gt" style="left:947px;top:537px">数字键盘</div>
<div class="kb" style="left:952px;top:557px;width:64px;height:43px;line-height:41px">7</div>
<div class="kb" style="left:1035px;top:557px;width:64px;height:43px;line-height:41px">8</div>
<div class="kb" style="left:1117px;top:557px;width:64px;height:43px;line-height:41px">9</div>
<div class="kb" style="left:952px;top:617px;width:64px;height:43px;line-height:41px">4</div>
<div class="kb" style="left:1035px;top:617px;width:64px;height:43px;line-height:41px">5</div>
<div class="kb" style="left:1117px;top:617px;width:64px;height:43px;line-height:41px">6</div>
<div class="kb" style="left:952px;top:677px;width:64px;height:43px;line-height:41px">1</div>
<div class="kb" style="left:1035px;top:677px;width:64px;height:43px;line-height:41px">2</div>
<div class="kb" style="left:1117px;top:677px;width:64px;height:43px;line-height:41px">3</div>
<div class="kb" style="left:952px;top:739px;width:64px;height:43px;line-height:41px">0</div>
<div class="kb" style="left:1035px;top:739px;width:64px;height:43px;line-height:41px">.</div>
<div class="kb" style="left:1117px;top:739px;width:64px;height:43px;line-height:35px;font-size:17px;font-family:'Liberation Sans',sans-serif">←</div>
<div class="kb" style="left:1035px;top:800px;width:64px;height:43px;line-height:41px"></div>
<div style="position:absolute;left:1065px;top:820px;width:5px;height:2px;background:#333"></div>
<div style="position:absolute;left:612px;top:545px;width:325px;height:303px;background:#FFFFFF;border:1px solid;border-color:#6E6E6E #FFFFFF #FFFFFF #6E6E6E;box-shadow:inset -1px -1px 0 #E6E6E6"></div>
<svg style="position:absolute;left:0;top:0" width="1200" height="860" viewBox="0 0 1200 860">
<defs><clipPath id="imgclip"><rect x="613" y="545" width="323" height="303"/></clipPath></defs>
<g clip-path="url(#imgclip)">
<polygon points="624,763 843,834 881,826 923,717 924,727 882,835 844,843 625,774" fill="#242424"/>
<polyline points="625,768 843,838 882,830 923,722" fill="none" stroke="#5E5E5E" stroke-width="0.8"/>
<polygon points="630,746 922,710 923,717 881,826 843,834 624,763" fill="#474747" stroke="#2A2A2A" stroke-width="0.8"/>
<polyline points="684,740 685,758 677,780" fill="none" stroke="#606060" stroke-width="0.9"/>
<line x1="840" y1="719" x2="913" y2="736" stroke="#606060" stroke-width="0.9"/>
<line x1="792" y1="813" x2="889" y2="796" stroke="#606060" stroke-width="0.9"/>
<ellipse cx="699" cy="760" rx="5" ry="2" fill="#242424"/>
<ellipse cx="743" cy="762" rx="5" ry="2" fill="#242424"/>
<ellipse cx="833" cy="745" rx="5" ry="2" fill="#242424"/>
<line x1="822" y1="683" x2="868" y2="719" stroke="#151515" stroke-width="17" stroke-linecap="butt"/>
<line x1="822" y1="683" x2="868" y2="719" stroke="#3A3A3A" stroke-width="13" stroke-linecap="butt"/>
<line x1="824" y1="686" x2="864" y2="716" stroke="#151515" stroke-width="1.2" stroke-linecap="butt"/>
<line x1="888" y1="664" x2="884" y2="722" stroke="#151515" stroke-width="15" stroke-linecap="butt"/>
<line x1="888" y1="664" x2="884" y2="722" stroke="#3A3A3A" stroke-width="11" stroke-linecap="butt"/>
<line x1="887" y1="666" x2="886" y2="694" stroke="#A89060" stroke-width="5" stroke-linecap="butt"/>
<rect x="890" y="696" width="22" height="27" rx="6" fill="#3A3A3A" stroke="#151515" stroke-width="1"/>
<rect x="647" y="737" width="26" height="25" rx="7" fill="#3A3A3A" stroke="#151515" stroke-width="1"/>
<rect x="650" y="733" width="20" height="8" rx="2" fill="#2E2E2E" stroke="#151515" stroke-width="0.8"/>
<polygon points="674,754 714,677 724,680 740,686 702,744 688,760" fill="#2E2E2E" stroke="#151515" stroke-width="1"/>
<polygon points="703,697 714,678 724,681 712,701" fill="#B49C6C"/>
<polygon points="717,696 735,694 709,728 693,726" fill="#B09868"/>
<line x1="728" y1="696" x2="703" y2="727" stroke="#6A5A38" stroke-width="1.6"/>
<line x1="721" y1="696" x2="698" y2="726" stroke="#D8C8A0" stroke-width="1.4"/>
<polygon points="724,681 740,686 735,695 718,696" fill="#2A2A2A"/>
<polygon points="696,710 703,697 712,701 705,714" fill="#3E3E3E"/>
<line x1="746" y1="687" x2="760" y2="698" stroke="#2E2E2E" stroke-width="12" stroke-linecap="butt"/>
<line x1="758" y1="696" x2="805" y2="756" stroke="#151515" stroke-width="14" stroke-linecap="butt"/>
<line x1="758" y1="696" x2="805" y2="756" stroke="#BCA676" stroke-width="11" stroke-linecap="butt"/>
<line x1="761" y1="699" x2="802" y2="752" stroke="#DDD0A8" stroke-width="2.5" stroke-linecap="butt"/>
<line x1="772" y1="716" x2="806" y2="760" stroke="#6A5A38" stroke-width="2" stroke-linecap="butt"/>
<line x1="802" y1="750" x2="838" y2="801" stroke="#151515" stroke-width="20" stroke-linecap="butt"/>
<line x1="802" y1="750" x2="838" y2="801" stroke="#3A3A3A" stroke-width="16" stroke-linecap="butt"/>
<line x1="807" y1="757" x2="834" y2="795" stroke="#151515" stroke-width="1.2" stroke-linecap="butt"/>
<line x1="877" y1="676" x2="865" y2="744" stroke="#151515" stroke-width="18" stroke-linecap="butt"/>
<line x1="877" y1="676" x2="865" y2="744" stroke="#BCA676" stroke-width="15" stroke-linecap="butt"/>
<line x1="873" y1="680" x2="862" y2="740" stroke="#E0D4AC" stroke-width="3" stroke-linecap="butt"/>
<line x1="879" y1="682" x2="869" y2="742" stroke="#7A6A48" stroke-width="1.6" stroke-linecap="butt"/>
<line x1="865" y1="738" x2="855" y2="795" stroke="#151515" stroke-width="22" stroke-linecap="butt"/>
<line x1="865" y1="738" x2="855" y2="795" stroke="#3A3A3A" stroke-width="18" stroke-linecap="butt"/>
<line x1="863" y1="744" x2="855" y2="792" stroke="#151515" stroke-width="1.5" stroke-linecap="butt"/>
<line x1="866" y1="746" x2="859" y2="792" stroke="#6A6A6A" stroke-width="1.2" stroke-linecap="butt"/>
<rect x="826" y="794" width="50" height="24" rx="7" fill="#2E2E2E" stroke="#151515" stroke-width="1"/>
<ellipse cx="840" cy="807" rx="10" ry="11" fill="#3A3A3A" stroke="#151515" stroke-width="0.8"/>
<ellipse cx="862" cy="805" rx="10" ry="11" fill="#3A3A3A" stroke="#151515" stroke-width="0.8"/>
<ellipse cx="654" cy="764" rx="3.2" ry="3.6" fill="none" stroke="#F0F0F0" stroke-width="1.6"/>
<ellipse cx="819" cy="813" rx="3.2" ry="3.6" fill="none" stroke="#F0F0F0" stroke-width="1.6"/>
<ellipse cx="879" cy="803" rx="3.2" ry="3.6" fill="none" stroke="#F0F0F0" stroke-width="1.6"/>
<ellipse cx="911" cy="718" rx="3.2" ry="3.6" fill="none" stroke="#F0F0F0" stroke-width="1.6"/>
<ellipse cx="796" cy="646.5" rx="105.5" ry="42" fill="#A8E242" stroke="#3A4A20" stroke-width="0.8"/>
<ellipse cx="796" cy="641" rx="105" ry="41.5" fill="#FEFA7A" stroke="#3A3A2A" stroke-width="0.8"/>
<rect x="885.1" y="638.1" width="1.8" height="1.5" fill="#4A4A50"/>
<rect x="729.8" y="642.0" width="1.8" height="1.5" fill="#4A4A50"/>
<rect x="823.3" y="665.3" width="1.8" height="1.5" fill="#4A4A50"/>
<rect x="710.8" y="624.7" width="1.8" height="1.5" fill="#4A4A50"/>
<rect x="828.3" y="650.6" width="1.8" height="1.5" fill="#4A4A50"/>
<rect x="802.0" y="604.4" width="1.8" height="1.5" fill="#4A4A50"/>
<rect x="730.9" y="619.6" width="1.8" height="1.5" fill="#4A4A50"/>
<rect x="783.5" y="669.4" width="1.8" height="1.5" fill="#4A4A50"/>
<rect x="787.0" y="622.6" width="1.8" height="1.5" fill="#4A4A50"/>
<rect x="867.4" y="658.2" width="1.8" height="1.5" fill="#4A4A50"/>
<rect x="757.2" y="618.6" width="1.8" height="1.5" fill="#4A4A50"/>
<rect x="851.9" y="632.7" width="1.8" height="1.5" fill="#4A4A50"/>
<rect x="868.8" y="631.6" width="1.8" height="1.5" fill="#4A4A50"/>
<rect x="882.2" y="638.5" width="1.8" height="1.5" fill="#4A4A50"/>
<rect x="706.3" y="651.7" width="1.8" height="1.5" fill="#4A4A50"/>
<rect x="854.5" y="621.9" width="1.8" height="1.5" fill="#4A4A50"/>
<rect x="709.3" y="627.1" width="1.8" height="1.5" fill="#4A4A50"/>
<rect x="715.8" y="620.0" width="1.8" height="1.5" fill="#4A4A50"/>
<rect x="858.4" y="614.2" width="1.8" height="1.5" fill="#4A4A50"/>
<rect x="731.0" y="660.2" width="1.8" height="1.5" fill="#4A4A50"/>
<rect x="718.5" y="652.9" width="1.8" height="1.5" fill="#4A4A50"/>
<rect x="715.5" y="634.4" width="1.8" height="1.5" fill="#4A4A50"/>
<rect x="735.7" y="621.9" width="1.8" height="1.5" fill="#4A4A50"/>
<rect x="754.9" y="672.9" width="1.8" height="1.5" fill="#4A4A50"/>
<rect x="735.2" y="632.2" width="1.8" height="1.5" fill="#4A4A50"/>
<rect x="870.4" y="652.8" width="1.8" height="1.5" fill="#4A4A50"/>
<rect x="735.8" y="620.9" width="1.8" height="1.5" fill="#4A4A50"/>
<rect x="853.3" y="626.8" width="1.8" height="1.5" fill="#4A4A50"/>
<rect x="709.9" y="647.9" width="1.8" height="1.5" fill="#4A4A50"/>
<rect x="742.0" y="649.4" width="1.8" height="1.5" fill="#4A4A50"/>
<rect x="892.4" y="639.6" width="1.8" height="1.5" fill="#4A4A50"/>
<rect x="811.7" y="671.4" width="1.8" height="1.5" fill="#4A4A50"/>
<rect x="743.4" y="615.3" width="1.8" height="1.5" fill="#4A4A50"/>
<rect x="876.3" y="649.6" width="1.8" height="1.5" fill="#4A4A50"/>
<rect x="779.5" y="608.1" width="1.8" height="1.5" fill="#4A4A50"/>
<rect x="741.1" y="658.0" width="1.8" height="1.5" fill="#4A4A50"/>
<rect x="745.0" y="667.9" width="1.8" height="1.5" fill="#4A4A50"/>
<rect x="816.3" y="623.9" width="1.8" height="1.5" fill="#4A4A50"/>
<rect x="727.8" y="659.3" width="1.8" height="1.5" fill="#4A4A50"/>
<rect x="808.5" y="670.2" width="1.8" height="1.5" fill="#4A4A50"/>
<rect x="820.0" y="622.8" width="1.8" height="1.5" fill="#4A4A50"/>
<rect x="784.6" y="604.5" width="1.8" height="1.5" fill="#4A4A50"/>
<rect x="728.0" y="630.1" width="1.8" height="1.5" fill="#4A4A50"/>
<rect x="811.2" y="610.4" width="1.8" height="1.5" fill="#4A4A50"/>
<rect x="767.1" y="673.4" width="1.8" height="1.5" fill="#4A4A50"/>
<rect x="836.2" y="648.0" width="1.8" height="1.5" fill="#4A4A50"/>
<rect x="792.3" y="660.1" width="1.8" height="1.5" fill="#4A4A50"/>
<rect x="706.8" y="644.8" width="1.8" height="1.5" fill="#4A4A50"/>
<rect x="845.8" y="657.9" width="1.8" height="1.5" fill="#4A4A50"/>
<rect x="764.9" y="656.4" width="1.8" height="1.5" fill="#4A4A50"/>
<rect x="778.6" y="665.1" width="1.8" height="1.5" fill="#4A4A50"/>
<rect x="872.3" y="647.0" width="1.8" height="1.5" fill="#4A4A50"/>
<rect x="707.8" y="652.6" width="1.8" height="1.5" fill="#4A4A50"/>
<rect x="843.9" y="631.7" width="1.8" height="1.5" fill="#4A4A50"/>
<rect x="845.4" y="647.7" width="1.8" height="1.5" fill="#4A4A50"/>
<rect x="783.5" y="669.1" width="1.8" height="1.5" fill="#4A4A50"/>
<rect x="792.0" y="618.6" width="1.8" height="1.5" fill="#4A4A50"/>
<rect x="837.7" y="640.8" width="1.8" height="1.5" fill="#4A4A50"/>
<rect x="820.0" y="675.9" width="1.8" height="1.5" fill="#4A4A50"/>
<rect x="754.2" y="655.8" width="1.8" height="1.5" fill="#4A4A50"/>
<rect x="733.5" y="613.6" width="1.8" height="1.5" fill="#4A4A50"/>
<rect x="881.2" y="654.3" width="1.8" height="1.5" fill="#4A4A50"/>
<rect x="783.8" y="673.5" width="1.8" height="1.5" fill="#4A4A50"/>
<rect x="759.7" y="654.8" width="1.8" height="1.5" fill="#4A4A50"/>
<rect x="732.7" y="635.3" width="1.8" height="1.5" fill="#4A4A50"/>
<rect x="875.9" y="631.4" width="1.8" height="1.5" fill="#4A4A50"/>
<rect x="813.5" y="625.8" width="1.8" height="1.5" fill="#4A4A50"/>
<rect x="719.6" y="640.7" width="1.8" height="1.5" fill="#4A4A50"/>
<rect x="749.1" y="613.5" width="1.8" height="1.5" fill="#4A4A50"/>
<rect x="785.6" y="622.3" width="1.8" height="1.5" fill="#4A4A50"/>
<rect x="736.0" y="633.9" width="1.8" height="1.5" fill="#4A4A50"/>
<rect x="757.2" y="669.1" width="1.8" height="1.5" fill="#4A4A50"/>
<rect x="839.8" y="646.9" width="1.8" height="1.5" fill="#4A4A50"/>
<rect x="755.9" y="665.2" width="1.8" height="1.5" fill="#4A4A50"/>
<rect x="865.2" y="619.2" width="1.8" height="1.5" fill="#4A4A50"/>
<ellipse cx="796" cy="642.5" rx="28" ry="11.5" fill="#FFFFFF" stroke="#303030" stroke-width="0.8"/>
<path d="M769,641 A28,11.5 0 0 1 823,640 A27,8 0 0 0 769,643 Z" fill="#C4C4DC"/>
<polygon points="784,647 796,641 812,650 800,654" fill="#5A4A30"/>
<polygon points="774,650 790,641 796,643 784,653" fill="#202020"/>
<polygon points="792,575 798,575 798.8,641 793,641" fill="#3CCFE4" stroke="#1E9AB8" stroke-width="0.6"/>
<polygon points="793.8,549 791.2,575 798.6,575" fill="#3CCFE4" stroke="#1E9AB8" stroke-width="0.6"/>
<polygon points="795,638.5 846,612 848.5,616.5 797,643" fill="#14E614" stroke="#0A9A0A" stroke-width="0.5"/>
<polygon points="844.5,610.5 858.5,609 849.5,618" fill="#14E614" stroke="#0A9A0A" stroke-width="0.5"/>
<polygon points="795,639.5 856,657 855,662 796,645" fill="#F41414" stroke="#A00A0A" stroke-width="0.5"/>
<polygon points="856,654.5 874,665 854.5,663.5" fill="#F41414" stroke="#A00A0A" stroke-width="0.5"/>
</g>
</svg>
<div class="t" style="left:771px;top:548px;font-family:'Liberation Serif',serif;font-size:30px;line-height:30px;font-weight:normal;color:#5C2A18;transform:scaleX(0.75);transform-origin:0 0">Z</div>
<div class="t" style="left:862px;top:578px;font-family:'Liberation Serif',serif;font-size:30px;line-height:30px;font-weight:normal;color:#5C2A18;transform:scaleX(0.68);transform-origin:0 0">Y</div>
<div class="t" style="left:821px;top:653px;font-family:'Liberation Serif',serif;font-size:30px;line-height:30px;font-weight:normal;color:#5C2A18;transform:scaleX(0.68);transform-origin:0 0">X</div>
<div class="t" style="left:685px;top:678px;font-family:'Liberation Serif',serif;font-size:30px;line-height:30px;font-weight:normal;color:#FF0000;transform:scaleX(0.95);transform-origin:0 0">6</div>
<div class="t" style="left:828px;top:692px;font-family:'Liberation Serif',serif;font-size:30px;line-height:30px;font-weight:normal;color:#FF0000;transform:scaleX(0.95);transform-origin:0 0">5</div>
<div class="t" style="left:899px;top:678px;font-family:'Liberation Serif',serif;font-size:30px;line-height:30px;font-weight:normal;color:#FF0000;transform:scaleX(0.95);transform-origin:0 0">4</div>
<div class="t" style="left:687px;top:725px;font-family:'Liberation Serif',serif;font-size:30px;line-height:30px;font-weight:normal;color:#FFFFFF;transform:scaleX(0.95);transform-origin:0 0">1</div>
<div class="t" style="left:806px;top:763px;font-family:'Liberation Serif',serif;font-size:30px;line-height:30px;font-weight:normal;color:#FFFFFF;transform:scaleX(0.95);transform-origin:0 0">2</div>
<div class="t" style="left:865px;top:746px;font-family:'Liberation Serif',serif;font-size:30px;line-height:30px;font-weight:normal;color:#FFFFFF;transform:scaleX(0.95);transform-origin:0 0">3</div>
</body></html>
